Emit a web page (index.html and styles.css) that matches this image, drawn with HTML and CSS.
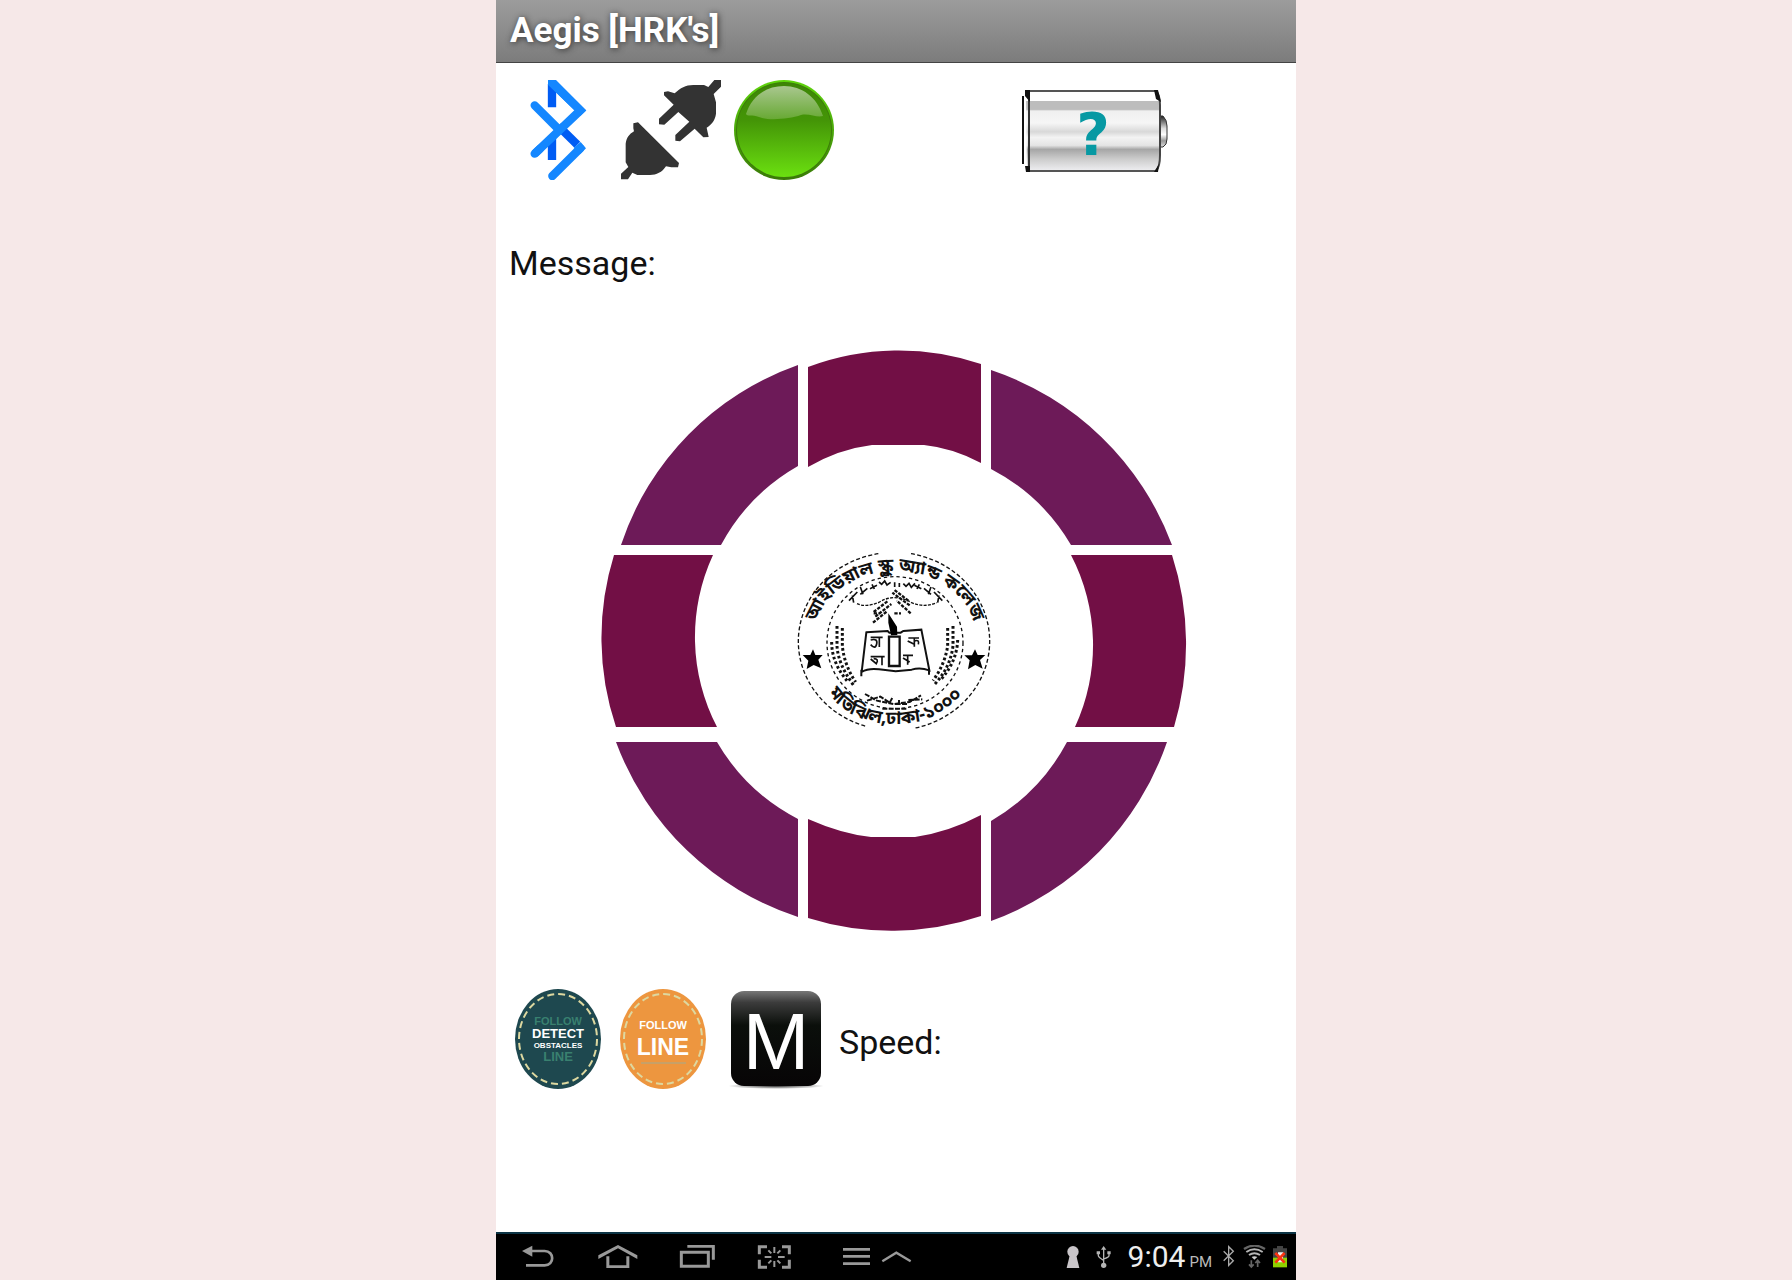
FILE: index.html
```html
<!DOCTYPE html>
<html lang="en">
<head>
<meta charset="utf-8">
<meta name="viewport" content="width=device-width, initial-scale=1">
<title>Aegis [HRK's]</title>
<link rel="stylesheet" href="styles.css">
</head>
<body>
<div class="screen">
  <header class="titlebar"><h1 class="title">Aegis [HRK's]</h1></header>
  <main class="content">
    <div class="status">
      <button class="icon" type="button" aria-label="Bluetooth">
        <svg width="100" height="100" viewBox="54 240 300 300">
          <g fill="none" stroke-width="25"><path d="M186 252V322M186 410V480" stroke="#005cf4"/><path d="M205 378L262 434" stroke="#005cf4"/>
          <path d="M134 316L208 390" stroke="#1487ff" stroke-linecap="round"/><path d="M134 461L271 331L184 246" stroke="#1487ff"/><path d="M134 461L150 446M271 445L187 528" stroke="#1487ff" stroke-linecap="round"/></g>
          <path d="M174 240h24l90 91-17 17-97-94zM262 434l10-8 16 19-17 17-20-18z" fill="#1487ff"/>
        </svg>
      </button>
      <button class="icon" type="button" aria-label="Connect">
        <svg width="100" height="100" viewBox="393 240 300 300" fill="#333">
          <path d="M430 370l14-3 123 122-3 13h-20l-16-3c-12 18-28 26-48 26h-38l-15-7-13 20h-21v-17l22-20-8-14v-56c3-18 10-28 25-37l-2-9z"/>
          <path d="M693 240v20l-22 22 7 25v34c-3 20-12 32-28 42l6 28-16 1-26-26-44 38-14-2v-17l42-40-33-29-42 38-16-1v-17l44-42-29-28v-10l12-2 20 6c18-16 32-25 56-25h32l13 6 18-21z"/>
        </svg>
      </button>
      <button class="icon" type="button" aria-label="Connected">
        <svg width="100" height="100" viewBox="0 0 100 100">
          <defs>
            <linearGradient id="green" x1="0" y1="0" x2="0" y2="1"><stop offset="0" stop-color="#3d8506"/><stop offset=".4" stop-color="#449507"/><stop offset="1" stop-color="#6be010"/></linearGradient>
            <linearGradient id="rim" x1="0" y1="0" x2="0" y2="1"><stop offset="0" stop-color="#5fd50c"/><stop offset=".5" stop-color="#4ba90a"/><stop offset="1" stop-color="#3a7a08"/></linearGradient>
            <linearGradient id="shine" x1="0" y1="0" x2="0" y2="1"><stop offset="0" stop-color="#a9c78f"/><stop offset="1" stop-color="#68a934"/></linearGradient>
          </defs>
          <circle cx="50" cy="50" r="50" fill="url(#rim)"/><circle cx="50" cy="50" r="48" fill="#3d7c0a"/><circle cx="50" cy="50" r="47" fill="url(#green)"/>
          <path d="M12 34C18 16 32 6 50 6s33 11 39 30c-6 2-14-3-22-1-12 4-32 6-42 2-7-3-12 0-13-3z" fill="url(#shine)"/>
        </svg>
      </button>
      <svg class="battery" width="146" height="84" viewBox="0 0 146 84" role="img" aria-label="Battery level unknown">
        <defs>
          <linearGradient id="cell" x1="0" y1="0" x2="0" y2="1"><stop offset="0" stop-color="#fff"/><stop offset=".12" stop-color="#fff"/><stop offset=".13" stop-color="#bdbdbd"/><stop offset=".23" stop-color="#bdbdbd"/><stop offset=".25" stop-color="#f0f0f0"/><stop offset=".4" stop-color="#f6f6f6"/><stop offset=".51" stop-color="#d8d8d8"/><stop offset=".58" stop-color="#f3f3f3"/><stop offset=".68" stop-color="#e4e4e4"/><stop offset=".73" stop-color="#a6a6a6"/><stop offset=".85" stop-color="#ccc"/><stop offset="1" stop-color="#efeff2"/></linearGradient>
          <linearGradient id="cap" x1="0" y1="0" x2="0" y2="1"><stop offset="0" stop-color="#222"/><stop offset=".4" stop-color="#ddd"/><stop offset=".6" stop-color="#fff"/><stop offset=".8" stop-color="#999"/><stop offset="1" stop-color="#ddd"/></linearGradient>
        </defs>
        <path d="M137 27h4q4 4 4 10v13q0 6-4 8h-4z" fill="url(#cap)" stroke="#333" stroke-width="1"/>
        <path d="M4 2h130q4 5 4 14v50q0 12-4 16H5z" fill="url(#cell)"/>
        <path d="M4 2h130M5 82h130" stroke="#555" stroke-width="2" fill="none"/>
        <path d="M134 2q4 4 4 14v50q0 12-4 16" stroke="#444" stroke-width="2" fill="none"/>
        <path d="M1 7v68" stroke="#111" stroke-width="2"/><path d="M7 1v82" stroke="#333" stroke-width="2"/><path d="M3 1h5v12L3 7zM132 1h4l3 12-5-3zM3 77h5v6H4zM132 83l5-8-1 8z" fill="#111"/>
        <text class="unknown" x="71" y="66" text-anchor="middle">?</text>
      </svg>
    </div>
    <p class="label message">Message:</p>
    <div class="wheel">
      <button class="segment corner" type="button" aria-label="Forward left"><svg width="200" height="195" viewBox="599 350 200 195"><path d="M799 365A286 286 0 0 0 622 545H722A200 200 0 0 1 799 466Z"/></svg></button>
      <button class="segment side" type="button" aria-label="Forward"><svg width="173" height="195" viewBox="809 350 173 195"><path d="M809 367A257 257 0 0 1 982 364V463Q954 448 925 445H873Q840 449 809 467Z"/></svg></button>
      <button class="segment corner" type="button" aria-label="Forward right"><svg width="200" height="195" viewBox="992 350 200 195"><path d="M992 370A292 292 0 0 1 1173 545H1072A200 200 0 0 0 992 469Z"/></svg></button>
      <button class="segment side" type="button" aria-label="Left"><svg width="200" height="172" viewBox="599 555 200 172"><path d="M615 555A280 280 0 0 0 617 727H718A195 195 0 0 1 714 555Z"/></svg></button>
      <button class="segment emblem" type="button" aria-label="School emblem">
        <svg width="173" height="172" viewBox="87 45 519 516">
          <defs><path id="arcTop" d="M104 296A243 202 0 0 1 592 296"/><path id="arcBottom" d="M124 418Q190 552 345 552Q500 552 578 428"/></defs>
          <g fill="none" stroke="#111" stroke-width="4">
            <path d="M298 41A287 267 0 0 0 58 304A287 267 0 0 0 264 560M396 41A287 267 0 0 1 632 304A287 267 0 0 1 404 565" stroke-dasharray="12 7"/>
            <ellipse cx="348" cy="308" rx="204" ry="198" stroke-dasharray="10 9"/>
            <path d="M234 191q25 12 64-3 46-30 100 0 38 16 75 0" stroke-dasharray="9 4"/>
            <path d="M300 126l8 7 9-10 7 12 11-8m12 0v14m14-12v12m12-10l8 8 9-9 7 12 11-12" stroke-width="5"/>
            <path d="M210 182l25-26m-11 32l-4-22m24-3l21-18m-13 18l-8-22m29 5l21-10m-8 11l-7-14M490 182l-25-26m11 32l4-22m-24-3l-21-18m13 18l8-22m-29 5l-21-10m8 11l7-14" stroke-width="5"/>
            <path d="M284 216l44-34m-39 48l48-38m-55 56l42-34m64-32l-44-34m48 48l-52-38m55 62l-42-38m-69 38h20m42 0h20" stroke-width="7" stroke-dasharray="10 4"/>
            <path d="M174 258v60q3 54 50 118M190 264v54q6 58 40 108M522 258v60q-8 66-58 118M506 264v54q-8 54-44 104M158 306q0 62 46 116M536 300q-2 62-48 116" stroke-width="9" stroke-dasharray="8 7"/>
            <path d="M258 462l36 20 50 10 48-6 34-20M264 482l40-12 28 18 10-18m8 22h34m-24-12v18m28-18l42-2M310 506h74" stroke-width="6" stroke-dasharray="15 4"/>
            <path d="M262 277l64-4 5 5h34l8-5 54-4 24 122q-28-10-53-2l-48 5-50-6q-32-4-52 8zM247 389v20M450 388v16" stroke-width="6"/>
            <path d="M330 290h32v88h-32z" stroke-width="7"/>
            <path d="M275 292h36m-10 0v29m-26-21q22-6 18 12t-18 2M388 294h32m-14 0v26m-20-17l20 10m0-10q16-6 12 10M275 350h42m-8 0v26m-34-19l17 14q9-15-8-15m102-12v30m-14-20l20 12m-20-20h30" stroke-width="5"/>
          </g>
          <path d="M328 220l26 40 1 25-19 1-8-38zM102 328l7 17h22l-13 14 9 26-23-10-21 12 5-25-17-17h23zM588 328l8 17h23l-16 15 8 26-22-11-22 13 5-27-16-15h23z" fill="#000"/>
          <text class="seal-text"><textPath href="#arcTop" startOffset="50%" text-anchor="middle">আইডিয়াল স্কুল অ্যান্ড কলেজ</textPath></text>
          <text class="seal-text"><textPath href="#arcBottom" startOffset="50%" text-anchor="middle">মতিঝিল,ঢাকা-১০০০</textPath></text>
        </svg>
      </button>
      <button class="segment side" type="button" aria-label="Right"><svg width="200" height="172" viewBox="992 555 200 172"><path d="M1173 555A290 290 0 0 1 1175 727H1076A195 195 0 0 0 1072 555Z"/></svg></button>
      <button class="segment corner" type="button" aria-label="Back left"><svg width="200" height="195" viewBox="599 737 200 195"><path d="M617 742H718A200 200 0 0 0 799 819V917A290 290 0 0 1 617 742Z"/></svg></button>
      <button class="segment side" type="button" aria-label="Back"><svg width="173" height="195" viewBox="809 737 173 195"><path d="M809 819Q843 834 872 837H916Q950 832 982 815V916A280 280 0 0 1 809 918Z"/></svg></button>
      <button class="segment corner" type="button" aria-label="Back right"><svg width="200" height="195" viewBox="992 737 200 195"><path d="M1068 742H1168A290 290 0 0 1 992 921V821A200 200 0 0 0 1068 742Z"/></svg></button>
    </div>
    <div class="actions">
      <button class="icon" type="button" aria-label="Detect obstacles">
        <svg width="100" height="100" viewBox="0 0 100 100">
          <ellipse cx="50" cy="50" rx="43" ry="50" fill="#1e484f"/><ellipse class="stitch" cx="50" cy="50" rx="39" ry="45"/>
          <g class="badge-text"><g fill="#39806f"><text class="t-ghost" x="50" y="36">FOLLOW</text><text class="t-small" x="50" y="72">LINE</text></g><g fill="#fff"><text class="t-small" x="50" y="49">DETECT</text><text class="t-tiny" x="50" y="59">OBSTACLES</text></g></g>
        </svg>
      </button>
      <button class="icon" type="button" aria-label="Follow line">
        <svg width="100" height="100" viewBox="0 0 100 100">
          <ellipse cx="50" cy="50" rx="43" ry="50" fill="#ed963f"/><ellipse class="stitch" cx="50" cy="50" rx="39" ry="45"/>
          <g class="badge-text" fill="#fff"><text class="t-ghost" x="50" y="40">FOLLOW</text><text class="t-large" x="50" y="66">LINE</text></g><path d="M28 74h45" stroke="#c7a067" stroke-width="2"/>
        </svg>
      </button>
      <button class="icon manual" type="button" aria-label="Manual mode">
        <svg width="100" height="100" viewBox="0 0 100 100">
          <defs><linearGradient id="black" x1="0" y1="0" x2="0" y2="1"><stop offset="0" stop-color="#777"/><stop offset=".12" stop-color="#3c3c3c"/><stop offset=".36" stop-color="#0b0f0b"/><stop offset="1" stop-color="#070506"/></linearGradient>
          <radialGradient id="shade"><stop offset="0" stop-color="#333"/><stop offset="1" stop-color="#333" stop-opacity="0"/></radialGradient></defs>
          <ellipse cx="50" cy="97" rx="48" ry="3" fill="url(#shade)"/><rect x="5" y="2" width="90" height="95" rx="13" fill="url(#black)"/>
          <text class="t-mode" x="50" y="80">M</text>
        </svg>
      </button>
      <p class="label speed">Speed:</p>
    </div>
  </main>
  <footer class="system">
    <nav class="keys" aria-label="System">
      <button type="button" aria-label="Back"><svg width="36" height="24" viewBox="92 75 108 72"><path d="M95 93l31-16v33z" fill="#999"/><path d="M122 93h41c30 0 30 43 0 43h-56" fill="none" stroke="#999" stroke-width="8"/></svg></button>
      <button type="button" aria-label="Home"><svg width="40" height="24" viewBox="320 75 120 72"><path d="M321 117v-11l59-31 58 31v11l-58-32zM345 109h9v27h51v-27h9v35h-69z" fill="#999"/></svg></button>
      <button type="button" aria-label="Recent apps"><svg width="37" height="24" viewBox="564 75 111 72"><path d="M571 97h81v42h-81zM589 79h78v40" fill="none" stroke="#999" stroke-width="9"/></svg></button>
      <button type="button" aria-label="Screenshot"><svg width="35" height="24" viewBox="804 75 105 72"><path d="M811 103V80h23M879 80h22v23M901 119v23h-22M834 142h-23v-23" fill="none" stroke="#999" stroke-width="9"/><path d="M856 81v18M856 123v18M827 111h20M867 111h20M838 91l9 9M874 91l-9 9M838 130l9-9M874 130l-9-9" stroke="#999" stroke-width="6"/></svg></button>
      <div class="key-pair">
        <button type="button" aria-label="Menu"><svg width="29" height="24" viewBox="1056 75 87 72"><path d="M1059 88h81M1059 109h81M1059 131h81" stroke="#999" stroke-width="8"/></svg></button>
        <button type="button" aria-label="Expand"><svg width="31" height="24" viewBox="1173 75 93 72"><path d="M1177 124l42-26 43 26" fill="none" stroke="#999" stroke-width="7"/></svg></button>
      </div>
    </nav>
    <div class="tray">
      <svg width="14" height="24" viewBox="78 75 42 72" fill="#c9c5c9"><circle cx="99" cy="95" r="17"/><path d="M90 103h18l10 41H80z"/></svg>
      <svg width="16" height="24" viewBox="174 75 48 72"><path d="M197 84v52M181 96v11q0 4 16 14M213 96v11q0 4-16 10" fill="none" stroke="#b5b5b5" stroke-width="4"/><path d="M189 89l8-11 8 11zM176 94h10v9h-10zM208 94h10v9h-10z" fill="#b5b5b5"/><circle cx="197" cy="136" r="8" fill="#b5b5b5"/></svg>
      <time class="clock" datetime="21:04">9:04<span class="ampm">PM</span></time>
      <div class="signals">
        <svg width="14" height="24" viewBox="549 75 42 72"><path d="M554 94l29 28-14 14V80l14 14-29 28" fill="none" stroke="#aaa" stroke-width="4"/></svg>
        <svg width="23" height="24" viewBox="615 72 69 72" fill="none"><path d="M618 84q31-20 63 0" stroke="#666" stroke-width="7"/><path d="M625 93q24-16 49 0M633 102q16-11 33 0" stroke="#b5b5b5" stroke-width="6"/><path d="M641 108q8-5 17 0l-9 8z" fill="#ccc"/><path d="M640 118v20m-7-8l7 8 7-8M659 138v-20m-7 8l7-8 7 8" stroke="#666" stroke-width="5"/></svg>
        <svg width="15" height="24" viewBox="699 72 45 72"><path d="M711 75h18v7h12v30h-42V82h12z" fill="#444"/><path d="M699 110h42v29h-42z" fill="#8fd100"/><path d="M714 94h16l-2 30h-14z" fill="#eee"/><path d="M706 96l28 29M734 96l-28 29" stroke="#fa3210" stroke-width="8"/></svg>
      </div>
    </div>
  </footer>
</div>
</body>
</html>
```
FILE: styles.css
```css
* { box-sizing: border-box; }
body {
  margin: 0;
  background: #f6e8e8;
  font-family: Roboto, "Liberation Sans", sans-serif;
  color: #111;
}
button {
  padding: 0;
  border: 0;
  background: none;
  cursor: pointer;
}
svg { display: block; }
.screen {
  display: flex;
  flex-direction: column;
  width: 100%;
  max-width: 800px;
  min-height: 100vh;
  margin: 0 auto;
  background: #fff;
}
.titlebar {
  padding: 11px 14px;
  border-bottom: 1px solid #444;
  background: linear-gradient(#9c9c9c, #7c7c7c);
}
.title {
  margin: 0;
  font-size: 35px;
  line-height: 40px;
  font-weight: 700;
  color: #fff;
  text-shadow: 1px 1px 6px #333;
}
.content { flex: 1; }
.status {
  display: flex;
  align-items: center;
  gap: 13px;
  padding: 17px 128px 0 12px;
}
.battery { margin: 2px 0 0 auto; }
.unknown { font: 700 58px "DejaVu Sans", sans-serif; fill: #0799a3; }
.label {
  margin: 0;
  font-size: 34px;
  line-height: 40px;
}
.message { padding: 63px 13px 67px; }
.wheel {
  display: grid;
  grid-template-columns: 200px 173px 200px;
  grid-template-rows: 195px 172px 195px;
  justify-content: center;
  gap: 10px;
  padding-right: 4px;
}
.corner svg { fill: #6d1a58; }
.side svg { fill: #720f45; }
.emblem svg { overflow: visible; }
.seal-text { font: 700 54px "Noto Sans Bengali", "Noto Sans", sans-serif; fill: #111; }
.actions {
  display: flex;
  align-items: center;
  gap: 5px;
  padding: 57px 12px 40px;
}
.manual { margin: 0 8px; }
.speed { padding-top: 5px; }
.stitch { fill: none; stroke: #ddd8a0; stroke-width: 2px; stroke-dasharray: 7 4; }
.badge-text { font-weight: 700; text-anchor: middle; }
.t-tiny { font-size: 8px; }
.t-ghost { font-size: 11px; }
.t-small { font-size: 13px; }
.t-large { font-size: 23px; }
.t-mode { font-size: 80px; text-anchor: middle; fill: #fff; }
.system {
  display: flex;
  align-items: center;
  justify-content: space-between;
  height: 48px;
  padding: 0 8px 0 25px;
  border-top: 2px solid #0c3445;
  background: #000;
}
.keys { display: flex; gap: 41px; }
.key-pair { display: flex; gap: 10px; margin-left: 9px; }
.tray { display: flex; align-items: center; gap: 16px; }
.clock { padding-top: 4px; font-size: 30px; line-height: 36px; color: #eee; }
.ampm { margin-left: 4px; font-size: 15px; color: #bbb; }
.signals { display: flex; gap: 7px; margin-left: -6px; }
```
